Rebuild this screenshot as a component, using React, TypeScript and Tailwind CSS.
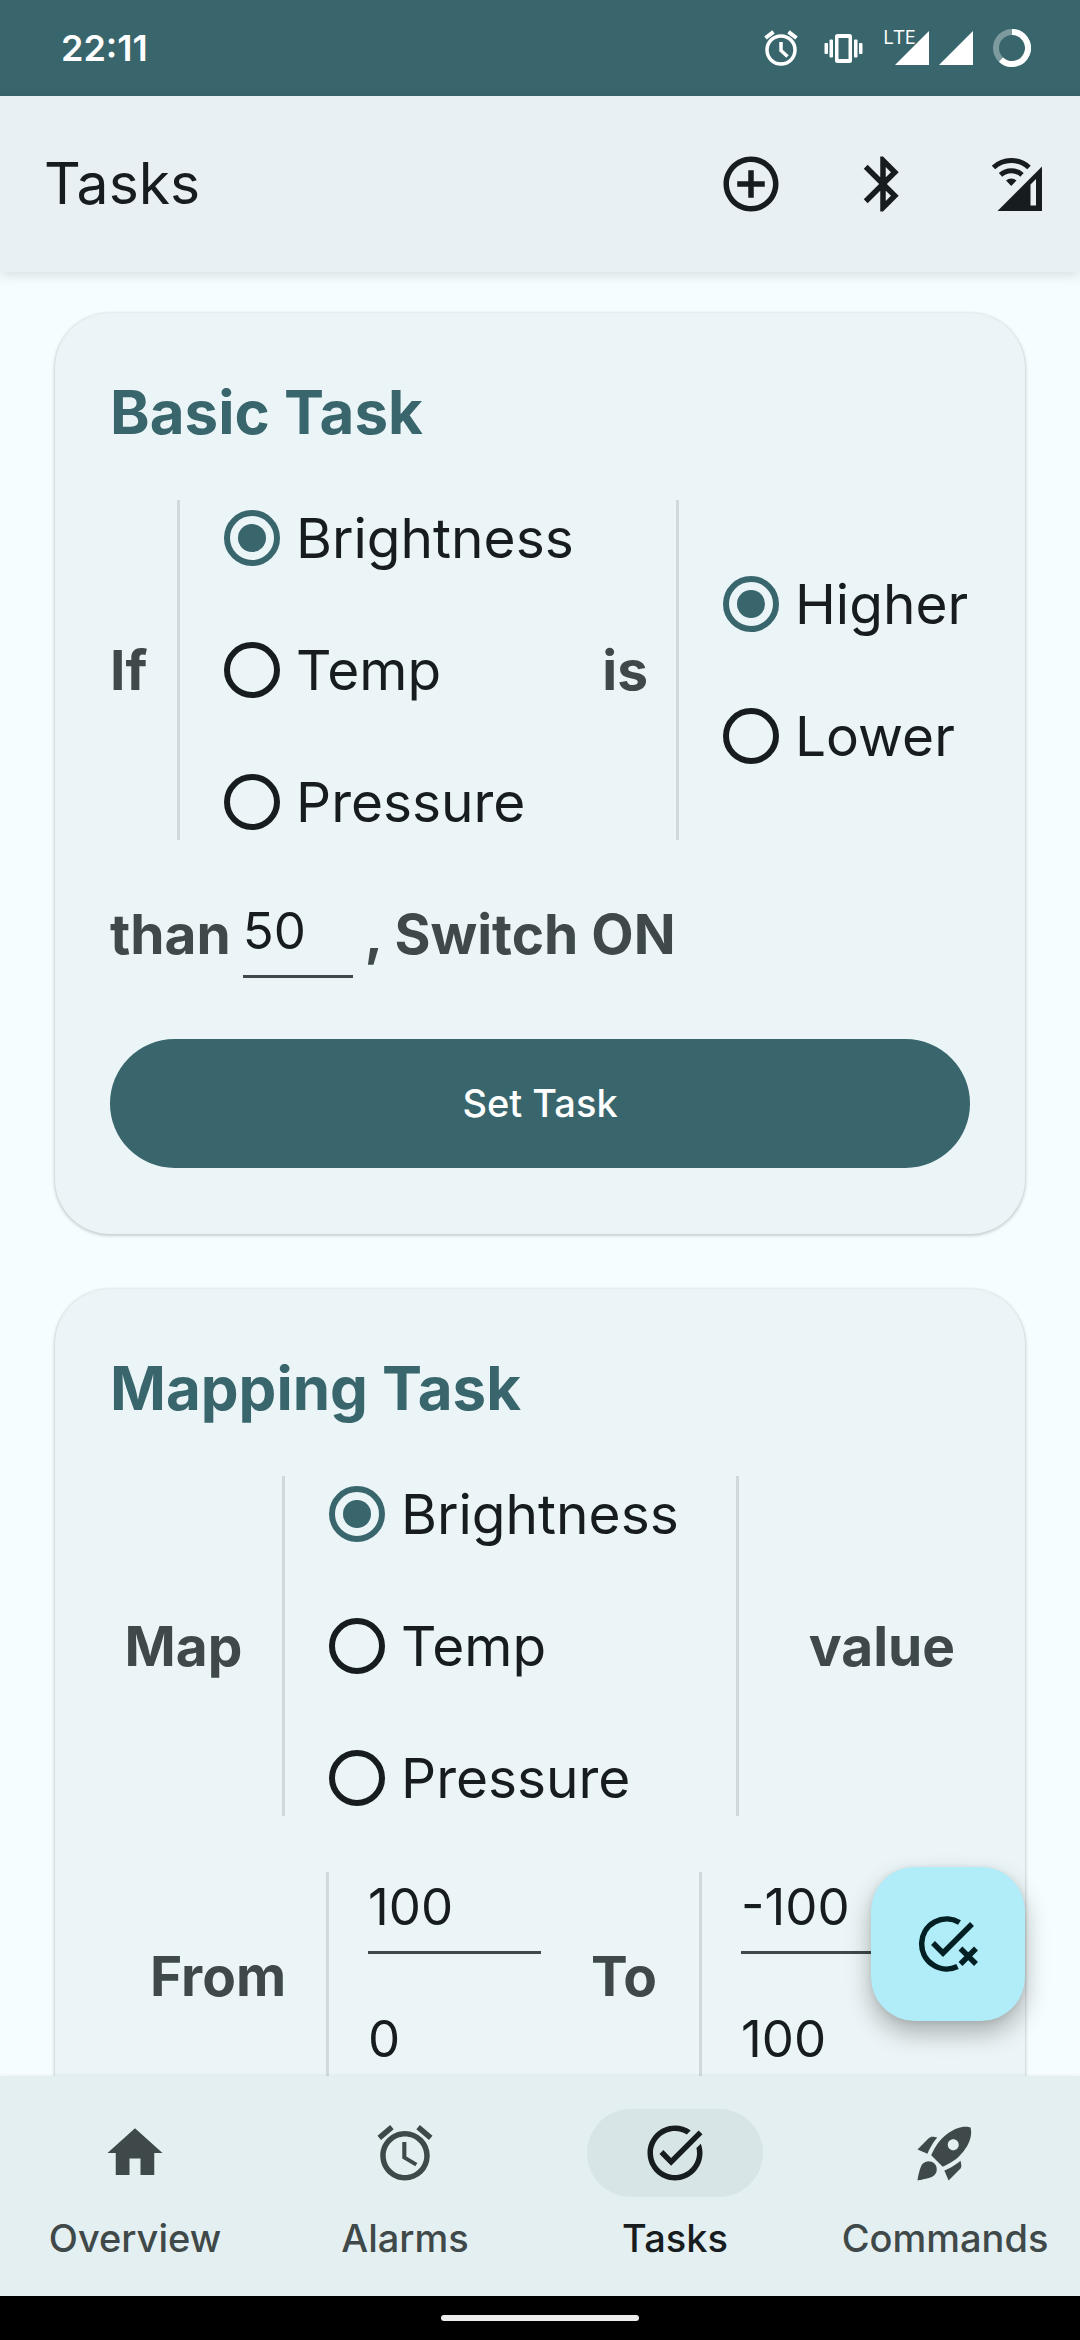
import { useState, type ReactNode } from "react";
import {
  MdAddCircleOutline,
  MdAlarm,
  MdBluetooth,
  MdHome,
  MdRocketLaunch,
  MdTaskAlt,
} from "react-icons/md";

function AlarmStatusIcon() {
  return (
    <svg viewBox="0 0 34 36" className="h-[36px] w-[34px]" fill="none" stroke="currentColor" aria-hidden="true">
      <circle cx="17" cy="20" r="14" strokeWidth="3.500" />
      <path strokeWidth="4" d="M1.500 8 9.500 1.800M32.500 8 24.500 1.800" />
      <path strokeWidth="3.500" d="M17 12v8.500l6.500 6" />
    </svg>
  );
}

function VibrateIcon() {
  return (
    <svg viewBox="0 0 39 29" className="h-[29px] w-[39px]" fill="currentColor" aria-hidden="true">
      <path
        fillRule="evenodd"
        d="M13.500 0h12a2.500 2.500 0 0 1 2.500 2.500v24a2.500 2.500 0 0 1-2.500 2.500h-12A2.500 2.500 0 0 1 11 26.500v-24A2.500 2.500 0 0 1 13.500 0Zm1 4v21h10V4Z"
      />
      <rect x="5.500" y="5.500" width="3.500" height="18" rx="1" />
      <rect x="30" y="5.500" width="3.500" height="18" rx="1" />
      <rect x="0.500" y="9" width="3.500" height="11" rx="1" />
      <rect x="35" y="9" width="3.500" height="11" rx="1" />
    </svg>
  );
}

function SignalIcon() {
  return (
    <svg viewBox="0 0 34 34" className="size-[34px]" fill="currentColor" aria-hidden="true">
      <path d="M34 0v34H0Z" />
    </svg>
  );
}

function BatteryIcon() {
  return (
    <svg viewBox="0 0 38 38" className="size-[38px]" fill="none" strokeWidth="6" aria-hidden="true">
      <circle cx="19" cy="19" r="16" stroke="#ffffff" strokeOpacity="0.35" />
      <path d="M19 3a16 16 0 1 1-11 27.600" stroke="#ffffff" />
    </svg>
  );
}

function NetworkIcon() {
  return (
    <svg viewBox="0 0 50 53" className="h-[53px] w-[50px]" aria-hidden="true">
      <g fill="none" stroke="currentColor" strokeWidth="5">
        <path d="M1.500 9.500a26 26 0 0 1 35.500 0" />
        <path d="M8.500 16.800a16 16 0 0 1 21.500 0" />
      </g>
      <path fill="currentColor" d="M14 22.500a8 8 0 0 1 10.500 0L19.250 28Z" />
      <path fill="currentColor" fillRule="evenodd" d="M50 8.500V53H5.500ZM38.500 26.500V47.500h5.500V21Z" />
    </svg>
  );
}

function ClearTasksIcon() {
  return (
    <svg viewBox="0 0 60 56" className="h-[56px] w-[60px]" fill="none" stroke="currentColor" aria-hidden="true">
      <path strokeWidth="5.500" d="M41.500 6.500A25 25 0 1 0 39.500 50.500" />
      <path strokeWidth="5.500" d="m15 27 10 10L54 8" />
      <path strokeWidth="5.500" d="M42.500 32.500 58 48M58 32.500 42.500 48" />
    </svg>
  );
}

function Divider() {
  return <div className="my-7 w-[3px] shrink-0 self-stretch bg-[#cfd8da]" />;
}

function Word({ children, className = "" }: { children: ReactNode; className?: string }) {
  return (
    <span className={`shrink-0 text-[55px] font-bold text-[#3f4949] ${className}`}>{children}</span>
  );
}

function RadioList({
  name,
  label,
  options,
  className = "",
}: {
  name: string;
  label: string;
  options: string[];
  className?: string;
}) {
  const [value, setValue] = useState(options[0]);
  return (
    <fieldset aria-label={label} className={className}>
      {options.map((option) => (
        <label key={option} className="flex h-[132px] items-center gap-4 text-[55px] text-[#171d1e]">
          <input
            type="radio"
            name={name}
            checked={value === option}
            onChange={() => setValue(option)}
            className="size-14 shrink-0 appearance-none rounded-full border-[6px] border-[#171d1e] bg-clip-content p-2 checked:border-[#38666c] checked:bg-[#38666c]"
          />
          {option}
        </label>
      ))}
    </fieldset>
  );
}

function NumberField({ label, initial, className }: { label: string; initial: string; className: string }) {
  const [value, setValue] = useState(initial);
  return (
    <input
      type="text"
      inputMode="numeric"
      aria-label={label}
      value={value}
      onChange={(event) => setValue(event.target.value)}
      className={`h-[88px] border-b-[3px] border-[#3f4949] bg-transparent pb-1 text-[51px] text-[#171d1e] outline-none ${className}`}
    />
  );
}

function RangeFields({ name, values }: { name: string; values: [string, string] }) {
  return (
    <div className="ml-[39px] flex flex-col">
      <div className="flex h-[132px] items-center">
        <NumberField label={`${name} start`} initial={values[0]} className="w-[173px]" />
      </div>
      <div className="flex h-[132px] items-center">
        <NumberField label={`${name} end`} initial={values[1]} className="w-[173px]" />
      </div>
    </div>
  );
}

function Card({ title, children }: { title: string; children: ReactNode }) {
  return (
    <section className="rounded-[55px] bg-[#ebf4f6] px-[55px] pt-[59px] pb-[66px] shadow-[0_1px_3px_1px_rgba(0,0,0,0.18)]">
      <h2 className="mb-5 text-[60px] leading-[80px] font-bold text-[#38666c]">{title}</h2>
      {children}
    </section>
  );
}

const sensors = ["Brightness", "Temp", "Pressure"];

const tabs = [
  { label: "Overview", Icon: MdHome },
  { label: "Alarms", Icon: MdAlarm },
  { label: "Tasks", Icon: MdTaskAlt },
  { label: "Commands", Icon: MdRocketLaunch },
];

export default function App() {
  const [active, setActive] = useState("Tasks");
  return (
    <div className="flex h-screen flex-col overflow-hidden bg-[#f5fdff] font-['Inter',sans-serif]">
      <div className="flex h-24 shrink-0 items-center justify-between bg-[#38666c] pr-[49px] pl-[61px] text-white">
        <span className="text-[36px] font-semibold">22:11</span>
        <div className="flex items-center">
          <div className="mr-[26px]">
            <AlarmStatusIcon />
          </div>
          <VibrateIcon />
          <div className="relative ml-[32px]">
            <SignalIcon />
            <span className="absolute -top-1 -left-[12px] font-['Open_Sans',sans-serif] text-[20px] leading-none font-medium">LTE</span>
          </div>
          <div className="mr-5 ml-[10px]">
            <SignalIcon />
          </div>
          <BatteryIcon />
        </div>
      </div>

      <header className="relative z-10 flex h-44 shrink-0 items-center justify-between bg-[#e8f0f3] pr-[38px] pl-11 text-[#171d1e] shadow-[0_3px_12px_rgba(0,0,0,0.13)]">
        <h1 className="text-[57px]">Tasks</h1>
        <div className="flex items-center">
          <button type="button" aria-label="Add task" className="mr-[66px]">
            <MdAddCircleOutline className="size-[66px]" />
          </button>
          <button type="button" aria-label="Bluetooth" className="mr-[76px]">
            <MdBluetooth className="size-[66px]" />
          </button>
          <button type="button" aria-label="Network">
            <NetworkIcon />
          </button>
        </div>
      </header>

      <div className="relative min-h-0 flex-1">
        <main className="flex h-full flex-col gap-[55px] overflow-y-auto px-[55px] pt-[41px] pb-[55px] [scrollbar-width:none]">
          <Card title="Basic Task">
            <div className="flex items-center">
              <Word className="w-[67px]">If</Word>
              <Divider />
              <RadioList name="basic-sensor" label="Sensor" options={sensors} className="ml-11 flex-1" />
              <Word className="mr-7">is</Word>
              <Divider />
              <RadioList
                name="basic-compare"
                label="Comparison"
                options={["Higher", "Lower"]}
                className="ml-11 w-[247px]"
              />
            </div>
            <div className="flex h-[132px] items-center">
              <Word>than</Word>
              <NumberField label="Threshold" initial="50" className="mr-3 ml-3 w-[110px]" />
              <Word>, Switch ON</Word>
            </div>
            <button
              type="button"
              className="mt-[39px] h-[129px] w-full rounded-full bg-[#38666c] text-[38px] font-medium text-white"
            >
              Set Task
            </button>
          </Card>

          <Card title="Mapping Task">
            <div className="flex items-center">
              <Word className="mr-[25px] w-[147px] text-center">Map</Word>
              <Divider />
              <RadioList name="map-sensor" label="Sensor" options={sensors} className="ml-11 flex-1" />
              <Divider />
              <Word className="ml-[55px] w-[176px] text-center">value</Word>
            </div>
            <div className="flex items-center">
              <Word className="w-[216px] text-center">From</Word>
              <Divider />
              <RangeFields name="From" values={["100", "0"]} />
              <Word className="ml-2 w-[150px] text-center">To</Word>
              <Divider />
              <RangeFields name="To" values={["-100", "100"]} />
            </div>
          </Card>
        </main>

        <button
          type="button"
          aria-label="Clear tasks"
          className="absolute right-[55px] bottom-[55px] flex size-[154px] items-center justify-center rounded-[44px] bg-[#b0edf8] text-[#021f23] shadow-[0_12px_24px_rgba(0,0,0,0.28),0_1px_6px_rgba(0,0,0,0.08)]"
        >
          <ClearTasksIcon />
        </button>
      </div>

      <nav className="relative z-10 grid h-[220px] shrink-0 grid-cols-4 bg-[#e4eff1] shadow-[0_0_4px_rgba(0,0,0,0.08)]">
        {tabs.map(({ label, Icon }) => {
          const selected = label === active;
          return (
            <button
              key={label}
              type="button"
              aria-current={selected ? "page" : undefined}
              onClick={() => setActive(label)}
              className={`flex flex-col items-center pt-[33px] ${selected ? "text-[#171d1e]" : "text-[#3f4949]"}`}
            >
              <span
                className={`flex h-[88px] w-44 items-center justify-center rounded-full ${selected ? "bg-[#d7e5e7]" : ""}`}
              >
                <Icon className="size-[66px]" />
              </span>
              <span className="mt-4 text-[38px] leading-[50px] font-medium">{label}</span>
            </button>
          );
        })}
      </nav>

      <div className="flex h-11 shrink-0 items-center justify-center bg-black">
        <div className="h-[6px] w-[198px] rounded-full bg-[#ececec]" />
      </div>
    </div>
  );
}
